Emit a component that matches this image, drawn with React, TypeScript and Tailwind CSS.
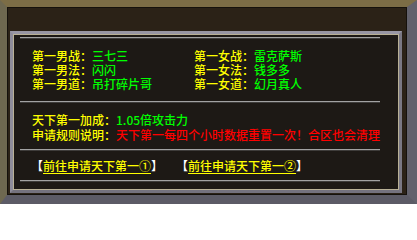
import React from "react";

const Sep = () => (
  <div className="ml-[6px] w-[360px] h-[2px] border-t border-t-[#a2a2a2] border-b border-b-[#3e3c3a]" />
);

const Pair = ({ label, value }: { label: string; value: string }) => (
  <div className="whitespace-nowrap">
    <span className="text-[#ffff00]">{label}：</span>
    <span className="text-[#00ff00]">{value}</span>
  </div>
);

export default function App() {
  return (
    <div
      className="w-[417px] h-[204px] bg-[#2b2217] border-t-[7px] border-l-[7px] border-r-[10px] border-b-[9px] border-t-[#7c6d46] border-l-[#6e6850] border-r-[#62616c] border-b-[#5c5b66] pt-[24px] pl-[3px] pr-[5px] pb-[2px] shadow-[inset_0_0_0_1px_#15110c]"
      style={{ fontFamily: '"Noto Sans CJK SC", "Noto Sans", sans-serif' }}
    >
      <div className="w-[392px] h-[162px] border-[3px] border-t-[#9896a4] border-l-[#8e8c9a] border-r-[#7a7884] border-b-[#74727e]">
        <div className="h-full border border-[#b9b196] bg-[#1d1915] pt-[2px] text-[12px] leading-[14px] font-medium">
          <Sep />
          <div className="pl-[18px] pt-[10px] grid grid-cols-[162px_auto]">
            <Pair label="第一男战" value="三七三" />
            <Pair label="第一女战" value="雷克萨斯" />
            <Pair label="第一男法" value="闪闪" />
            <Pair label="第一女法" value="钱多多" />
            <Pair label="第一男道" value="吊打碎片哥" />
            <Pair label="第一女道" value="幻月真人" />
          </div>
          <div className="h-[10px]" />
          <Sep />
          <div className="pl-[18px] pt-[9px] leading-[15px] whitespace-nowrap">
            <div>
              <span className="text-[#ffff00]">天下第一加成：</span>
              <span className="text-[#00ff00]">1.05倍攻击力</span>
            </div>
            <div>
              <span className="text-[#ffff00]">申请规则说明：</span>
              <span className="text-[#ff0000]">天下第一每四个小时数据重置一次！合区也会清理</span>
            </div>
          </div>
          <div className="h-[7px]" />
          <Sep />
          <div className="pl-[17px] pt-[8px] flex whitespace-nowrap">
            <span className="text-white">【</span>
            <span className="text-[#ffff00] underline underline-offset-2">前往申请天下第一①</span>
            <span className="text-white">】</span>
            <span className="w-[13px]" />
            <span className="text-white">【</span>
            <span className="text-[#ffff00] underline underline-offset-2">前往申请天下第一②</span>
            <span className="text-white">】</span>
          </div>
          <div className="h-[7px]" />
          <Sep />
        </div>
      </div>
    </div>
  );
}
